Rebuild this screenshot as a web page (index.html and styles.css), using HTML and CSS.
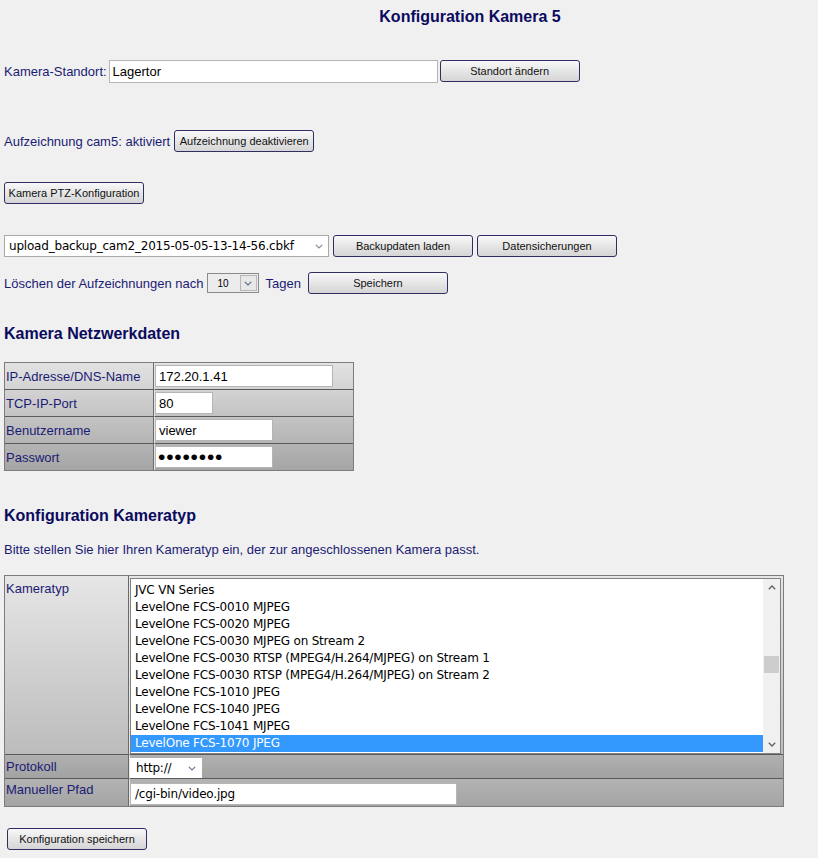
FILE: index.html
```html
<!DOCTYPE html>
<html lang="de">
<head>
<meta charset="utf-8">
<title>Konfiguration Kamera 5</title>
<link rel="stylesheet" href="styles.css">
</head>
<body>
<h1 class="title">Konfiguration Kamera 5</h1>

<div class="row row-standort">
  <label class="lbl" for="standort">Kamera-Standort:</label>
  <input class="txt txt-standort" id="standort" type="text" value="Lagertor">
  <button class="btn btn-low" type="button">Standort ändern</button>
</div>

<div class="row row-aufz">
  <span class="lbl">Aufzeichnung cam5: aktiviert</span>
  <button class="btn" type="button">Aufzeichnung deaktivieren</button>
</div>

<div class="row row-ptz">
  <button class="btn" type="button">Kamera PTZ-Konfiguration</button>
</div>

<div class="row row-backup">
  <div class="sel sel-backup">
    <select class="sel-input"><option>upload_backup_cam2_2015-05-05-13-14-56.cbkf</option></select>
    <span class="sel-arrow"><svg width="8" height="5" viewBox="0 0 8 5"><polyline points="0.8,0.8 4,4 7.2,0.8" fill="none" stroke="#8c8c8c" stroke-width="1.2"/></svg></span>
  </div>
  <button class="btn" type="button">Backupdaten laden</button>
  <button class="btn btn-gap" type="button">Datensicherungen</button>
</div>

<div class="row row-loeschen">
  <span class="lbl">Löschen der Aufzeichnungen nach</span>
  <div class="sel sel-days">
    <select class="sel-input days-input"><option>10</option></select>
    <span class="sel-arrow days-arrow"><svg width="8" height="5" viewBox="0 0 8 5"><polyline points="0.8,0.8 4,4 7.2,0.8" fill="none" stroke="#5a6a8a" stroke-width="1.2"/></svg></span>
  </div>
  <span class="lbl lbl-tagen">Tagen</span>
  <button class="btn" type="button">Speichern</button>
</div>

<h2 class="section">Kamera Netzwerkdaten</h2>

<table class="net">
  <tr>
    <td class="k">IP-Adresse/DNS-Name</td>
    <td class="v"><input class="txt txt-ip" type="text" value="172.20.1.41"></td>
  </tr>
  <tr>
    <td class="k">TCP-IP-Port</td>
    <td class="v"><input class="txt txt-port" type="text" value="80"></td>
  </tr>
  <tr>
    <td class="k">Benutzername</td>
    <td class="v"><input class="txt txt-user" type="text" value="viewer"></td>
  </tr>
  <tr>
    <td class="k">Passwort</td>
    <td class="v"><input class="txt txt-user txt-pass" type="password" value="12345678"></td>
  </tr>
</table>

<h2 class="section section-typ">Konfiguration Kameratyp</h2>

<p class="hint">Bitte stellen Sie hier Ihren Kameratyp ein, der zur angeschlossenen Kamera passt.</p>

<table class="cam">
  <tr class="r1">
    <td class="k">Kameratyp</td>
    <td class="v">
      <div class="list">
        <ul class="list-items" role="listbox">
          <li>JVC VN Series</li>
          <li>LevelOne FCS-0010 MJPEG</li>
          <li>LevelOne FCS-0020 MJPEG</li>
          <li>LevelOne FCS-0030 MJPEG on Stream 2</li>
          <li>LevelOne FCS-0030 RTSP (MPEG4/H.264/MJPEG) on Stream 1</li>
          <li>LevelOne FCS-0030 RTSP (MPEG4/H.264/MJPEG) on Stream 2</li>
          <li>LevelOne FCS-1010 JPEG</li>
          <li>LevelOne FCS-1040 JPEG</li>
          <li>LevelOne FCS-1041 MJPEG</li>
          <li class="on">LevelOne FCS-1070 JPEG</li>
        </ul>
        <div class="scroll">
          <span class="sb-btn"><svg width="8" height="5" viewBox="0 0 8 5"><polyline points="0.8,4.2 4,1 7.2,4.2" fill="none" stroke="#606060" stroke-width="1.3"/></svg></span>
          <span class="sb-track"><span class="sb-thumb"></span></span>
          <span class="sb-btn"><svg width="8" height="5" viewBox="0 0 8 5"><polyline points="0.8,0.8 4,4 7.2,0.8" fill="none" stroke="#606060" stroke-width="1.3"/></svg></span>
        </div>
      </div>
    </td>
  </tr>
  <tr class="r2">
    <td class="k">Protokoll</td>
    <td class="v">
      <div class="sel sel-proto">
        <select class="sel-input"><option>http://</option></select>
        <span class="sel-arrow"><svg width="8" height="5" viewBox="0 0 8 5"><polyline points="0.8,0.8 4,4 7.2,0.8" fill="none" stroke="#6a7a9a" stroke-width="1.2"/></svg></span>
      </div>
    </td>
  </tr>
  <tr class="r3">
    <td class="k">Manueller Pfad</td>
    <td class="v"><input class="txt txt-path" type="text" value="/cgi-bin/video.jpg"></td>
  </tr>
</table>

<div class="row row-save">
  <button class="btn" type="button">Konfiguration speichern</button>
</div>
</body>
</html>
```

FILE: styles.css
```css
html {
  background: #f0f0f0;
}

body {
  margin: 0;
  padding: 0 4px;
  background: #f0f0f0;
  color: #1b1b74;
  font-family: "Liberation Sans", Arial, sans-serif;
  font-size: 13px;
  line-height: 15px;
}

.title {
  margin: 0;
  padding: 8px 0 0 122px;
  font-size: 16px;
  line-height: 18px;
  font-weight: bold;
  color: #0a0a5e;
  text-align: center;
}

.section {
  margin: 31px 0 0 0;
  font-size: 16px;
  line-height: 18px;
  font-weight: bold;
  color: #0a0a5e;
}

.section-typ {
  margin-top: 36px;
}

.hint {
  margin: 17px 0 0 0;
}

.row {
  display: flex;
  align-items: center;
}

.row-standort {
  margin-top: 34px;
  align-items: flex-start;
  gap: 2px;
}

.row-standort .lbl {
  line-height: 23px;
}

.btn-low {
  margin-left: 3px;
  margin-top: 3px;
}

.row-aufz {
  margin-top: 47px;
  gap: 4px;
}

.row-ptz {
  margin-top: 30px;
}

.row-backup {
  margin-top: 31px;
  gap: 4px;
}

.btn-gap {
  margin-left: 1px;
}

.row-loeschen {
  margin-top: 15px;
  gap: 3px;
}

.lbl-tagen {
  margin: 0 4px 0 4px;
}

.row-save {
  margin-top: 21px;
  padding-left: 3px;
}

/* buttons */
.btn {
  box-sizing: border-box;
  width: 140px;
  height: 22px;
  margin: 0;
  padding: 0;
  border: 1px solid #2e2e60;
  border-radius: 3px;
  background: linear-gradient(#f8f8f8, #e6e6e6 50%, #d5d5d5);
  color: #111;
  font-family: "Liberation Sans", Arial, sans-serif;
  font-size: 11px;
}

/* text inputs */
.txt {
  box-sizing: border-box;
  height: 23px;
  margin: 0;
  padding: 0 3px;
  border: 1px solid #b5b5b5;
  background: #fff;
  color: #000;
  font-family: "Liberation Sans", Arial, sans-serif;
  font-size: 13px;
  outline: none;
}

.txt-standort {
  width: 329px;
}

/* custom select */
.sel {
  box-sizing: border-box;
  display: flex;
  align-items: stretch;
  background: #fff;
  border: 1px solid #a9a9a9;
}

.sel-input {
  flex: 1;
  min-width: 0;
  margin: 0;
  padding: 0 0 0 4px;
  border: 0;
  background: transparent;
  color: #000;
  font-family: "DejaVu Sans", sans-serif;
  font-size: 12px;
  letter-spacing: -0.2px;
  appearance: none;
  -webkit-appearance: none;
  outline: none;
}

.sel-arrow {
  display: flex;
  align-items: center;
  justify-content: center;
  width: 18px;
}

.sel-backup {
  width: 325px;
  height: 22px;
}

.sel-days {
  width: 52px;
  height: 20px;
  border-color: #8a8a8a;
  background: #ececec;
  padding: 1px;
}

.days-input {
  padding-left: 9px;
  font-family: "Liberation Sans", Arial, sans-serif;
  font-size: 10px;
  letter-spacing: 0;
}

.days-arrow {
  width: 15px;
  border: 1px solid #b8b8b8;
  background: #e8e8e8;
}

.sel-proto {
  width: 72px;
  height: 20px;
  border-color: #fff;
}

.sel-proto .sel-input {
  padding-left: 5px;
}

/* network table */
.net {
  margin-top: 19px;
  border-collapse: separate;
  border-spacing: 0;
  border: 1px solid #7c7c7c;
  background: linear-gradient(#e2e2e2, #a5a5a5);
}

.net td {
  height: 26px;
  padding: 0;
  border-bottom: 1px solid #5a5a5a;
  vertical-align: middle;
}

.net tr:last-child td {
  border-bottom: 0;
}

.net .k {
  width: 146px;
  padding: 0 1px;
  border-right: 1px solid #6a6a6a;
}

.net .v {
  width: 198px;
  border-left: 1px solid #e6e6e6;
}

.txt-ip {
  width: 178px;
  height: 22px;
}

.txt-port {
  width: 58px;
  height: 22px;
}

.txt-user {
  width: 118px;
  height: 22px;
}

.txt-pass {
  font-size: 21px;
  letter-spacing: 0.8px;
  padding-left: 2px;
}

/* camera type table */
.cam {
  margin-top: 18px;
  border-collapse: separate;
  border-spacing: 0;
  border: 1px solid #7c7c7c;
}

.cam td {
  padding: 0;
  border-bottom: 1px solid #5a5a5a;
  vertical-align: top;
}

.cam tr:last-child td {
  border-bottom: 0;
}

.cam .k {
  width: 121px;
  padding-left: 1px;
  padding-right: 1px;
  border-right: 1px solid #6a6a6a;
}

.cam .v {
  width: 653px;
  border-left: 1px solid #e6e6e6;
}

.cam .r1 td {
  background: linear-gradient(#e6e6e6, #bcbcbc);
}

.cam .r1 .k {
  padding-top: 5px;
  height: 173px;
}

.cam .r1 .v {
  padding-top: 2px;
  height: 176px;
}

.cam .r2 td {
  background: linear-gradient(#b0b0b0, #a2a2a2);
}

.cam .r2 .k {
  padding-top: 4px;
  height: 19px;
}

.cam .r2 .v {
  padding-top: 3px;
  height: 20px;
}

.cam .r3 td {
  background: linear-gradient(#b3b3b3, #a4a4a4);
}

.cam .r3 .k {
  padding-top: 3px;
  height: 24px;
}

.cam .r3 .v {
  padding-top: 4px;
  height: 23px;
}

.txt-path {
  width: 327px;
  height: 22px;
  font-family: "DejaVu Sans", sans-serif;
  font-size: 12px;
  letter-spacing: -0.2px;
  padding-left: 4px;
}

/* list box */
.list {
  box-sizing: border-box;
  display: flex;
  width: 651px;
  height: 176px;
  border: 1px solid #828282;
  background: #fff;
}

.list-items {
  flex: 1;
  margin: 0;
  padding: 3px 0 0 0;
  list-style: none;
  color: #000;
  font-family: "DejaVu Sans", sans-serif;
  font-size: 12px;
  letter-spacing: -0.2px;
}

.list-items li {
  height: 17px;
  line-height: 17px;
  padding-left: 4px;
  white-space: nowrap;
}

.list-items li.on {
  background: #3399ff;
  color: #fff;
}

.scroll {
  display: flex;
  flex-direction: column;
  width: 17px;
  background: #f0f0f0;
}

.sb-btn {
  display: flex;
  align-items: center;
  justify-content: center;
  height: 17px;
}

.sb-track {
  flex: 1;
}

.sb-thumb {
  display: block;
  height: 17px;
  margin: 60px 1px 0 1px;
  background: #cdcdcd;
}
```
